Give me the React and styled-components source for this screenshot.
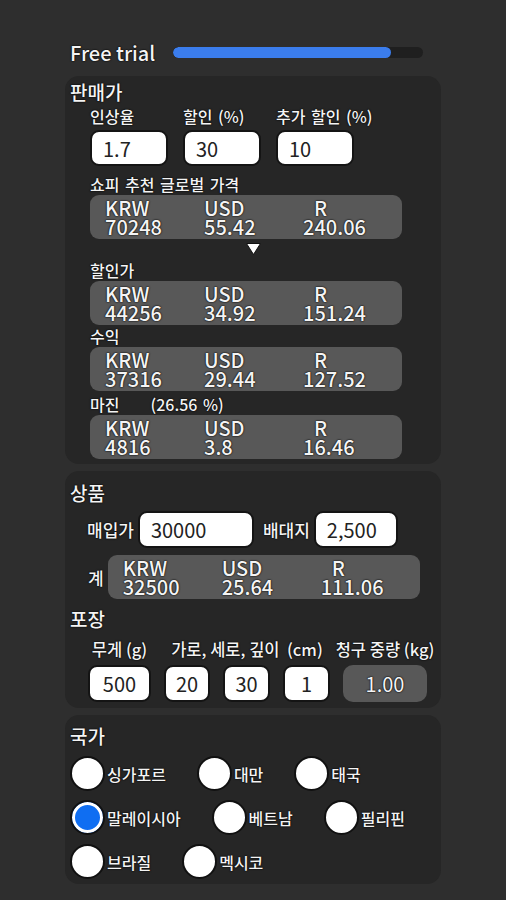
import React from "react";
import styled, { createGlobalStyle } from "styled-components";

const GlobalStyle = createGlobalStyle`
  html, body {
    margin: 0;
    padding: 0;
    background: #2e2e2e;
  }
  body {
    font-family: "Noto Sans CJK KR", "Noto Sans", sans-serif;
    font-weight: 500;
    color: #f4f4f4;
  }
`;

const outline = `text-shadow: 0 0 2px #000, 0 0 1px #000;`;

const Page = styled.div`
  width: 376px;
  padding: 40px 65px 17px;
  display: flex;
  flex-direction: column;
  gap: 7px;
`;

const Header = styled.div`
  display: flex;
  align-items: center;
  gap: 18px;
  height: 24px;
  padding: 0 18px 0 5px;
  margin-bottom: 5px;
`;

const TrialText = styled.span`
  font-size: 20px;
  font-weight: 500;
  white-space: nowrap;
  ${outline}
`;

const Progress = styled.div`
  flex: 1;
  height: 11px;
  border-radius: 6px;
  background: #1f1f1f;
  overflow: hidden;
`;

const ProgressFill = styled.div`
  height: 100%;
  background: #3b7ded;
  border-radius: 6px;
`;

const Panel = styled.section`
  background: #262626;
  border-radius: 14px;
  padding: ${(p) => p.$top}px 5px ${(p) => p.$bottom}px;
  display: flex;
  flex-direction: column;
`;

const SectionTitle = styled.h2`
  margin: ${(p) => p.$mt || 0}px 0 0;
  font-size: 19px;
  font-weight: 500;
  line-height: 22px;
  ${outline}
`;

const Indent = styled.div`
  padding-left: ${(p) => p.$left}px;
  display: flex;
  flex-direction: column;
`;

const FieldRow = styled.div`
  display: flex;
  gap: 15px;
  margin-top: 2px;
`;

const Field = styled.label`
  display: flex;
  flex-direction: column;
  gap: 3px;
`;

const SmallLabel = styled.span`
  font-size: 16px;
  line-height: 22px;
  word-spacing: 2px;
  white-space: nowrap;
  margin-top: ${(p) => p.$mt || 0}px;
  ${outline}
`;

const TextInput = styled.input`
  box-sizing: border-box;
  width: ${(p) => p.$w}px;
  height: ${(p) => p.$h || 36}px;
  border: 2px solid #141414;
  border-radius: 9px;
  background: #fff;
  color: #222;
  font-family: inherit;
  font-weight: 400;
  font-size: 20px;
  padding: 0 0 0 ${(p) => (p.$center ? 0 : 11)}px;
  text-align: ${(p) => (p.$center ? "center" : "left")};
  outline: none;
`;

const ResultBox = styled.div`
  box-sizing: border-box;
  width: 312px;
  height: 44px;
  padding: 3px 0 0 15px;
  background: #585858;
  border-radius: 9px;
  display: grid;
  grid-template-columns: 99px 99px 1fr;
`;

const ResultCol = styled.div`
  display: flex;
  flex-direction: column;
  font-size: 20px;
  line-height: 19px;
  ${outline}
`;

const Code = styled.span`
  padding-left: ${(p) => p.$shift || 0}px;
`;

const ArrowRow = styled.div`
  height: 20px;
  display: flex;
  justify-content: center;
  align-items: center;
  margin-left: ${(p) => -p.$left}px;
`;

const MarginLabel = styled.div`
  display: flex;
  gap: 31px;
`;

const InlineRow = styled.div`
  display: flex;
  align-items: center;
  margin-top: ${(p) => p.$mt}px;
  padding-left: ${(p) => p.$left}px;
`;

const InlineLabel = styled.span`
  font-size: 17px;
  margin: 0 ${(p) => p.$gap}px 0 ${(p) => p.$before || 0}px;
  ${outline}
`;

const PackRow = styled.div`
  display: flex;
  gap: 13px;
  margin-top: 8px;
  padding-left: 18px;
`;

const PackGroup = styled.div`
  display: flex;
  flex-direction: column;
  align-items: center;
  gap: 5px;
  width: ${(p) => (p.$w ? `${p.$w}px` : "auto")};
`;

const PackInputs = styled.div`
  display: flex;
  gap: 13px;
`;

const PackLabel = styled.span`
  font-size: 16.5px;
  line-height: 22px;
  white-space: nowrap;
  ${outline}
`;

const WeightBox = styled.div`
  width: 84px;
  height: 37px;
  border-radius: 10px;
  background: #585858;
  display: flex;
  align-items: center;
  justify-content: center;
  font-size: 20px;
  font-weight: 400;
  ${outline}
`;

const RadioRows = styled.div`
  display: flex;
  flex-direction: column;
  gap: 9px;
  margin-top: 9px;
`;

const RadioRow = styled.div`
  display: flex;
  gap: 31px;
`;

const RadioItem = styled.label`
  display: flex;
  align-items: center;
  gap: 2px;
`;

const RadioDot = styled.input`
  appearance: none;
  margin: 0;
  box-sizing: border-box;
  width: 35px;
  height: 35px;
  border-radius: 50%;
  border: 2px solid #111;
  background: #fff;

  &:checked {
    background: #0f6ef2;
    box-shadow: inset 0 0 0 3px #fff;
  }
`;

const RadioText = styled.span`
  font-size: 16px;
  ${outline}
`;

const Result = ({ values }) => (
  <ResultBox>
    {[["KRW", 0], ["USD", 0], ["R", 11]].map(([code, shift], i) => (
      <ResultCol key={code}>
        <Code $shift={shift}>{code}</Code>
        <span>{values[i]}</span>
      </ResultCol>
    ))}
  </ResultBox>
);

const countries = [
  ["싱가포르", "대만", "태국"],
  ["말레이시아", "베트남", "필리핀"],
  ["브라질", "멕시코"],
];

export default function App() {
  return (
    <>
      <GlobalStyle />
      <Page>
        <Header>
          <TrialText>Free trial</TrialText>
          <Progress>
            <ProgressFill style={{ width: "87%" }} />
          </Progress>
        </Header>

        <Panel $top={5} $bottom={5}>
          <SectionTitle>판매가</SectionTitle>
          <Indent $left={20}>
            <FieldRow>
              <Field>
                <SmallLabel>인상율</SmallLabel>
                <TextInput $w={78} defaultValue="1.7" />
              </Field>
              <Field>
                <SmallLabel>할인 (%)</SmallLabel>
                <TextInput $w={78} defaultValue="30" />
              </Field>
              <Field>
                <SmallLabel>추가 할인 (%)</SmallLabel>
                <TextInput $w={78} defaultValue="10" />
              </Field>
            </FieldRow>
            <SmallLabel $mt={7}>쇼피 추천 글로벌 가격</SmallLabel>
            <Result values={["70248", "55.42", "240.06"]} />
            <ArrowRow $left={20}>
              <svg width="15" height="12" viewBox="0 0 15 12">
                <path d="M0.5 0.5 H14.5 L7.5 11.5 Z" fill="#fff" stroke="#111" strokeWidth="1" />
              </svg>
            </ArrowRow>
            <SmallLabel>할인가</SmallLabel>
            <Result values={["44256", "34.92", "151.24"]} />
            <SmallLabel>수익</SmallLabel>
            <Result values={["37316", "29.44", "127.52"]} />
            <MarginLabel>
              <SmallLabel $mt={2}>마진</SmallLabel>
              <SmallLabel $mt={2}>(26.56 %)</SmallLabel>
            </MarginLabel>
            <Result values={["4816", "3.8", "16.46"]} />
          </Indent>
        </Panel>

        <Panel $top={11} $bottom={6}>
          <SectionTitle>상품</SectionTitle>
          <InlineRow $mt={7} $left={17}>
            <InlineLabel $gap={4}>매입가</InlineLabel>
            <TextInput $w={116} $h={37} defaultValue="30000" />
            <InlineLabel $gap={4} $before={9}>배대지</InlineLabel>
            <TextInput $w={84} $h={37} defaultValue="2,500" />
          </InlineRow>
          <InlineRow $mt={7} $left={18}>
            <InlineLabel $gap={4}>계</InlineLabel>
            <Result values={["32500", "25.64", "111.06"]} />
          </InlineRow>
          <SectionTitle $mt={9}>포장</SectionTitle>
          <PackRow>
            <PackGroup>
              <PackLabel>무게 (g)</PackLabel>
              <TextInput $w={63} $h={37} $center defaultValue="500" />
            </PackGroup>
            <PackGroup>
              <PackLabel>가로, 세로, 깊이&nbsp; (cm)</PackLabel>
              <PackInputs>
                <TextInput $w={46} $h={37} $center defaultValue="20" />
                <TextInput $w={47} $h={37} $center defaultValue="30" />
                <TextInput $w={47} $h={37} $center defaultValue="1" />
              </PackInputs>
            </PackGroup>
            <PackGroup $w={84}>
              <PackLabel>청구 중량 (kg)</PackLabel>
              <WeightBox>1.00</WeightBox>
            </PackGroup>
          </PackRow>
        </Panel>

        <Panel $top={10} $bottom={5}>
          <SectionTitle>국가</SectionTitle>
          <RadioRows>
            {countries.map((row, r) => (
              <RadioRow key={r}>
                {row.map((name) => (
                  <RadioItem key={name}>
                    <RadioDot
                      type="radio"
                      name="country"
                      defaultChecked={name === "말레이시아"}
                    />
                    <RadioText>{name}</RadioText>
                  </RadioItem>
                ))}
              </RadioRow>
            ))}
          </RadioRows>
        </Panel>
      </Page>
    </>
  );
}
